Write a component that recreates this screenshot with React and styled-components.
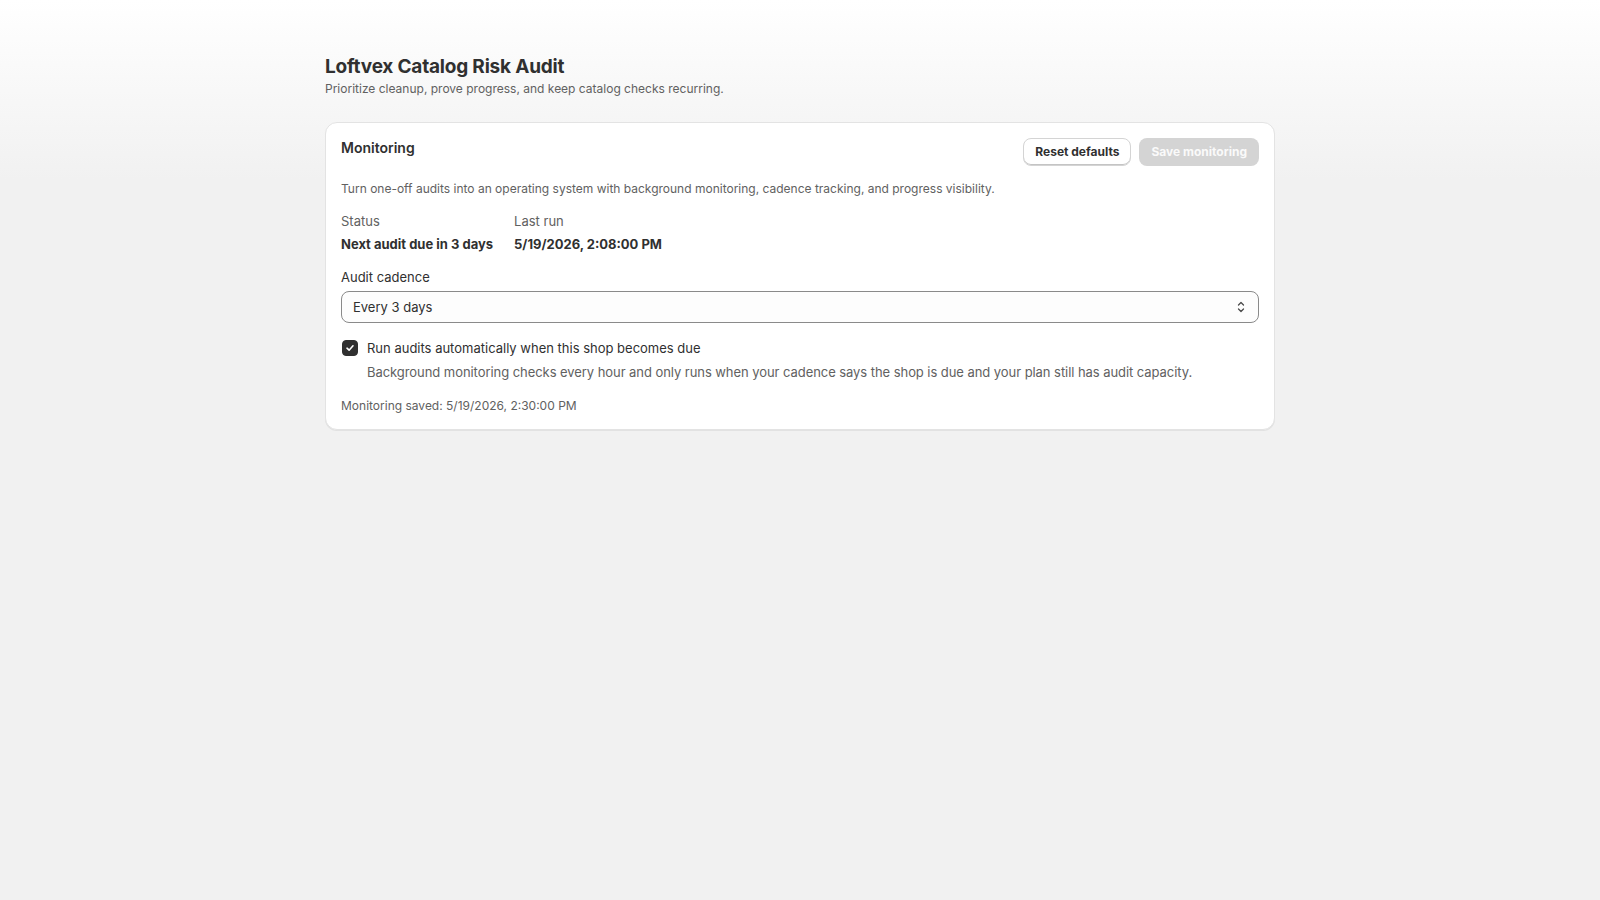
import React, { useState } from "react";
import styled, { createGlobalStyle } from "styled-components";

const GlobalStyle = createGlobalStyle`
  body {
    margin: 0;
    font-family: Inter, "Noto Sans", "Liberation Sans", sans-serif;
    color: #303030;
    background: #f1f1f1;
    -webkit-font-smoothing: antialiased;
  }
`;

export default function App() {
  const [cadence, setCadence] = useState("3");
  const [autoRun, setAutoRun] = useState(true);

  return (
    <>
      <GlobalStyle />
      <Frame>
        <Page>
          <PageHeader>
            <PageTitle>Loftvex Catalog Risk Audit</PageTitle>
            <Subtitle>Prioritize cleanup, prove progress, and keep catalog checks recurring.</Subtitle>
          </PageHeader>

          <Card>
            <CardHeader>
              <CardTitle>Monitoring</CardTitle>
              <ButtonGroup>
                <SecondaryButton type="button">Reset defaults</SecondaryButton>
                <PrimaryButton type="button" disabled>
                  Save monitoring
                </PrimaryButton>
              </ButtonGroup>
            </CardHeader>

            <BodyText>
              Turn one-off audits into an operating system with background monitoring, cadence tracking, and
              progress visibility.
            </BodyText>

            <StatRow>
              <Stat>
                <StatLabel>Status</StatLabel>
                <StatValue>Next audit due in 3 days</StatValue>
              </Stat>
              <Stat>
                <StatLabel>Last run</StatLabel>
                <StatValue>5/19/2026, 2:08:00 PM</StatValue>
              </Stat>
            </StatRow>

            <Field>
              <FieldLabel htmlFor="cadence">Audit cadence</FieldLabel>
              <SelectWrap>
                <Select id="cadence" value={cadence} onChange={(e) => setCadence(e.target.value)}>
                  <option value="1">Every day</option>
                  <option value="3">Every 3 days</option>
                  <option value="7">Every 7 days</option>
                  <option value="14">Every 14 days</option>
                </Select>
                <SelectIcon viewBox="0 0 20 20" aria-hidden="true">
                  <path d="M7.5 8 10 5.5 12.5 8M7.5 12 10 14.5 12.5 12" />
                </SelectIcon>
              </SelectWrap>
            </Field>

            <CheckField>
              <CheckRow>
                <CheckBox
                  type="button"
                  role="checkbox"
                  aria-checked={autoRun}
                  $checked={autoRun}
                  onClick={() => setAutoRun(!autoRun)}
                >
                  {autoRun && (
                    <svg width="10" height="10" viewBox="0 0 10 10" aria-hidden="true">
                      <path d="M2 5.2 4.1 7.2 8 2.8" fill="none" stroke="#fff" strokeWidth="1.6" strokeLinecap="round" strokeLinejoin="round" />
                    </svg>
                  )}
                </CheckBox>
                <CheckLabel>Run audits automatically when this shop becomes due</CheckLabel>
              </CheckRow>
              <HelpText>
                Background monitoring checks every hour and only runs when your cadence says the shop is due and
                your plan still has audit capacity.
              </HelpText>
            </CheckField>

            <SavedNote>Monitoring saved: 5/19/2026, 2:30:00 PM</SavedNote>
          </Card>
        </Page>
      </Frame>
    </>
  );
}

const Frame = styled.div`
  min-height: 100vh;
  background: linear-gradient(180deg, #ffffff 0px, #f1f1f1 180px, #f1f1f1 100%);
`;

const Page = styled.main`
  max-width: 950px;
  margin: 0 auto;
  padding: 55px 24px 24px;
  display: flex;
  flex-direction: column;
  gap: 25px;
`;

const PageHeader = styled.header`
  display: flex;
  flex-direction: column;
  gap: 2px;
`;

const PageTitle = styled.h1`
  margin: 0;
  font-size: 19px;
  line-height: 24px;
  font-weight: 700;
  letter-spacing: -0.2px;
  color: #303030;
`;

const Subtitle = styled.p`
  margin: 0;
  font-size: 12px;
  line-height: 16px;
  color: #616161;
`;

const Card = styled.section`
  background: #ffffff;
  border: 1px solid #e3e3e3;
  border-radius: 12px;
  box-shadow: 0 1px 0 0 rgba(26, 26, 26, 0.07);
  padding: 15px;
  display: flex;
  flex-direction: column;
`;

const CardHeader = styled.div`
  display: flex;
  justify-content: space-between;
  align-items: flex-start;
  margin-bottom: 15px;
`;

const CardTitle = styled.h2`
  margin: 0;
  font-size: 14px;
  line-height: 20px;
  font-weight: 600;
  color: #303030;
`;

const ButtonGroup = styled.div`
  display: flex;
  gap: 8px;
`;

const BaseButton = styled.button`
  height: 28px;
  padding: 0 12px;
  border-radius: 8px;
  font-family: inherit;
  font-size: 12px;
  font-weight: 650;
  line-height: 16px;
  cursor: pointer;
`;

const SecondaryButton = styled(BaseButton)`
  padding: 0 11px;
  background: #ffffff;
  color: #303030;
  border: 1px solid #d4d4d4;
  box-shadow: inset 0 -1px 0 #c4c4c4;
`;

const PrimaryButton = styled(BaseButton)`
  background: #303030;
  color: #ffffff;
  border: none;

  &:disabled {
    background: #d4d4d4;
    color: #fafafa;
    cursor: default;
  }
`;

const BodyText = styled.p`
  margin: 0 0 14px;
  font-size: 12px;
  line-height: 16px;
  color: #616161;
`;

const StatRow = styled.div`
  display: flex;
  gap: 21px;
  margin-bottom: 13px;
`;

const Stat = styled.div`
  display: flex;
  flex-direction: column;
  gap: 3px;
`;

const StatLabel = styled.span`
  font-size: 13px;
  line-height: 20px;
  color: #616161;
`;

const StatValue = styled.span`
  font-size: 13px;
  line-height: 20px;
  font-weight: 650;
  color: #303030;
`;

const Field = styled.div`
  display: flex;
  flex-direction: column;
  gap: 4px;
  margin-bottom: 15px;
`;

const FieldLabel = styled.label`
  font-size: 13px;
  line-height: 20px;
  color: #303030;
`;

const SelectWrap = styled.div`
  position: relative;
`;

const Select = styled.select`
  width: 100%;
  height: 32px;
  appearance: none;
  padding: 0 32px 0 11px;
  border: 1px solid #8a8a8a;
  border-radius: 8px;
  background: #fdfdfd;
  font-family: inherit;
  font-size: 13px;
  color: #303030;
  outline: none;
`;

const SelectIcon = styled.svg`
  position: absolute;
  right: 8px;
  top: 6px;
  width: 20px;
  height: 20px;
  fill: none;
  stroke: #4a4a4a;
  stroke-width: 1.3;
  stroke-linecap: round;
  stroke-linejoin: round;
  pointer-events: none;
`;

const CheckField = styled.div`
  display: flex;
  flex-direction: column;
  gap: 4px;
  margin-bottom: 16px;
`;

const CheckRow = styled.div`
  display: flex;
  align-items: center;
  gap: 9px;
`;

const CheckBox = styled.button`
  width: 16px;
  height: 16px;
  margin-left: 1px;
  padding: 0;
  border-radius: 4px;
  border: 1px solid ${(p) => (p.$checked ? "#303030" : "#8a8a8a")};
  background: ${(p) => (p.$checked ? "#303030" : "#fdfdfd")};
  display: flex;
  align-items: center;
  justify-content: center;
  cursor: pointer;
`;

const CheckLabel = styled.span`
  font-size: 13px;
  line-height: 20px;
  color: #303030;
`;

const HelpText = styled.p`
  margin: 0 0 0 26px;
  font-size: 13px;
  line-height: 20px;
  letter-spacing: -0.06px;
  color: #616161;
`;

const SavedNote = styled.p`
  margin: 0;
  font-size: 12px;
  line-height: 16px;
  color: #616161;
`;
